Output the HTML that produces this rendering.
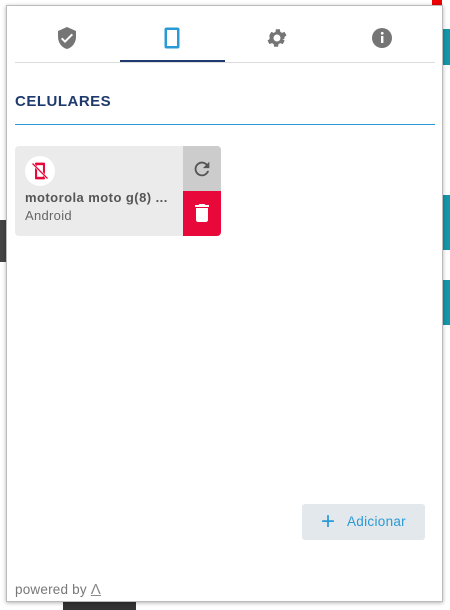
<!DOCTYPE html>
<html><head><style>
body{margin:0;width:450px;height:610px;position:relative;overflow:hidden;background:#fff;font-family:"Liberation Sans",sans-serif}
.bg{position:absolute}
#pop{position:absolute;left:6px;top:5px;width:435px;height:595px;background:#fff;border:1px solid #bbb;box-shadow:0 1px 4px rgba(0,0,0,.3)}
.tab{position:absolute;top:20px;width:24px;height:24px}
</style></head><body>
<div class="bg" style="left:443px;top:29px;width:7px;height:36px;background:#1497a8"></div>
<div class="bg" style="left:443px;top:195px;width:7px;height:55px;background:#1497a8"></div>
<div class="bg" style="left:443px;top:280px;width:7px;height:45px;background:#1497a8"></div>
<div class="bg" style="left:0;top:220px;width:7px;height:42px;background:#444"></div>
<div class="bg" style="left:63px;top:601px;width:73px;height:9px;background:#333"></div>
<div class="bg" style="left:432px;top:0;width:10px;height:5px;background:#e00"></div>
<div id="pop">
 <svg class="tab" style="left:48px" viewBox="0 0 24 24"><path fill="#757575" d="M12 1L3 5v6c0 5.6 3.8 10.7 9 12 5.2-1.3 9-6.4 9-12V5l-9-4zm-2 16l-4-4 1.4-1.4L10 14.2l6.6-6.6L18 9l-8 8z"/></svg>
 <svg style="position:absolute;left:157px;top:21px" width="16" height="22" viewBox="0 0 16 22"><rect x="0.5" y="0.5" width="15" height="21" rx="2" fill="#2a9ad6"/><rect x="3" y="3" width="10" height="16" fill="#fff"/></svg>
 <svg class="tab" style="left:258px" viewBox="0 0 24 24"><path fill="#757575" d="M19.4 13a7.5 7.5 0 000-2l2.1-1.6-2-3.5-2.5 1a7 7 0 00-1.7-1l-.4-2.6h-4l-.4 2.6a7 7 0 00-1.7 1l-2.5-1-2 3.5L4.6 11a7.5 7.5 0 000 2l-2.1 1.6 2 3.5 2.5-1a7 7 0 001.7 1l.4 2.6h4l.4-2.6a7 7 0 001.7-1l2.5 1 2-3.5-2.3-1.6zM12 15.5a3.5 3.5 0 110-7 3.5 3.5 0 010 7z"/></svg>
 <svg class="tab" style="left:363px" viewBox="0 0 24 24"><circle cx="12" cy="12" r="10" fill="#757575"/><rect x="11" y="10" width="2.4" height="7" fill="#fff"/><circle cx="12.2" cy="7.3" r="1.4" fill="#fff"/></svg>
 <div style="position:absolute;left:113px;top:54px;width:105px;height:2px;background:#1f3a6e"></div>
 <div style="position:absolute;left:8px;top:56px;width:420px;height:1px;background:#ddd"></div>
 <div style="position:absolute;left:8px;top:87px;font-weight:bold;font-size:15px;color:#1f3a6e;letter-spacing:.5px">CELULARES</div>
 <div style="position:absolute;left:8px;top:118px;width:420px;height:1px;background:#2a9ad6"></div>
 <div style="position:absolute;left:8px;top:140px;width:206px;height:90px;background:#ebebeb;border-radius:4px;overflow:hidden">
  <div style="position:absolute;left:10px;top:10px;width:30px;height:30px;border-radius:50%;background:#fff"></div>
  <svg style="position:absolute;left:15px;top:15px" width="20" height="20" viewBox="0 0 24 24"><rect x="6" y="2" width="12" height="20" rx="1" fill="#e8083a"/><rect x="8.5" y="5" width="7" height="14" fill="#fff"/><path d="M3 3l18 18" stroke="#fff" stroke-width="3"/><path d="M3 3l18 18" stroke="#e8083a" stroke-width="1.5"/></svg>
  <div style="position:absolute;left:10px;top:44px;font-weight:bold;font-size:13px;color:#555;letter-spacing:.45px">motorola moto g(8) ...</div>
  <div style="position:absolute;left:10px;top:62px;font-size:13px;color:#666;letter-spacing:.3px">Android</div>
  <div style="position:absolute;left:168px;top:0;width:38px;height:45px;background:#ccc"></div>
  <svg style="position:absolute;left:176px;top:12px" width="22" height="22" viewBox="0 0 24 24"><path fill="#555" d="M17.65 6.35A8 8 0 1019.7 14h-2.1A6 6 0 1112 6c1.66 0 3.1.7 4.2 1.8L13 11h7V4l-2.35 2.35z"/></svg>
  <div style="position:absolute;left:168px;top:45px;width:38px;height:45px;background:#e8083a"></div>
  <svg style="position:absolute;left:175px;top:55px" width="24" height="24" viewBox="0 0 24 24"><path fill="#fff" d="M6 19c0 1.1.9 2 2 2h8c1.1 0 2-.9 2-2V7H6v12zM19 4h-3.5l-1-1h-5l-1 1H5v2h14V4z"/></svg>
 </div>
 <div style="position:absolute;left:295px;top:498px;width:123px;height:36px;background:#e2e8eb;border-radius:3px;color:#2a9ad6;font-size:13.5px;line-height:36px">
  <span style="position:absolute;left:19px;top:0;font-size:24px;line-height:35px">+</span><span style="position:absolute;left:45px;letter-spacing:.3px">Adicionar</span></div>
 <div style="position:absolute;left:8px;top:575px;font-size:13.5px;color:#777;letter-spacing:.2px">powered by <span style="display:inline-block;text-decoration:underline;font-size:15px;color:#888">Λ</span></div>
</div>
</body></html>
